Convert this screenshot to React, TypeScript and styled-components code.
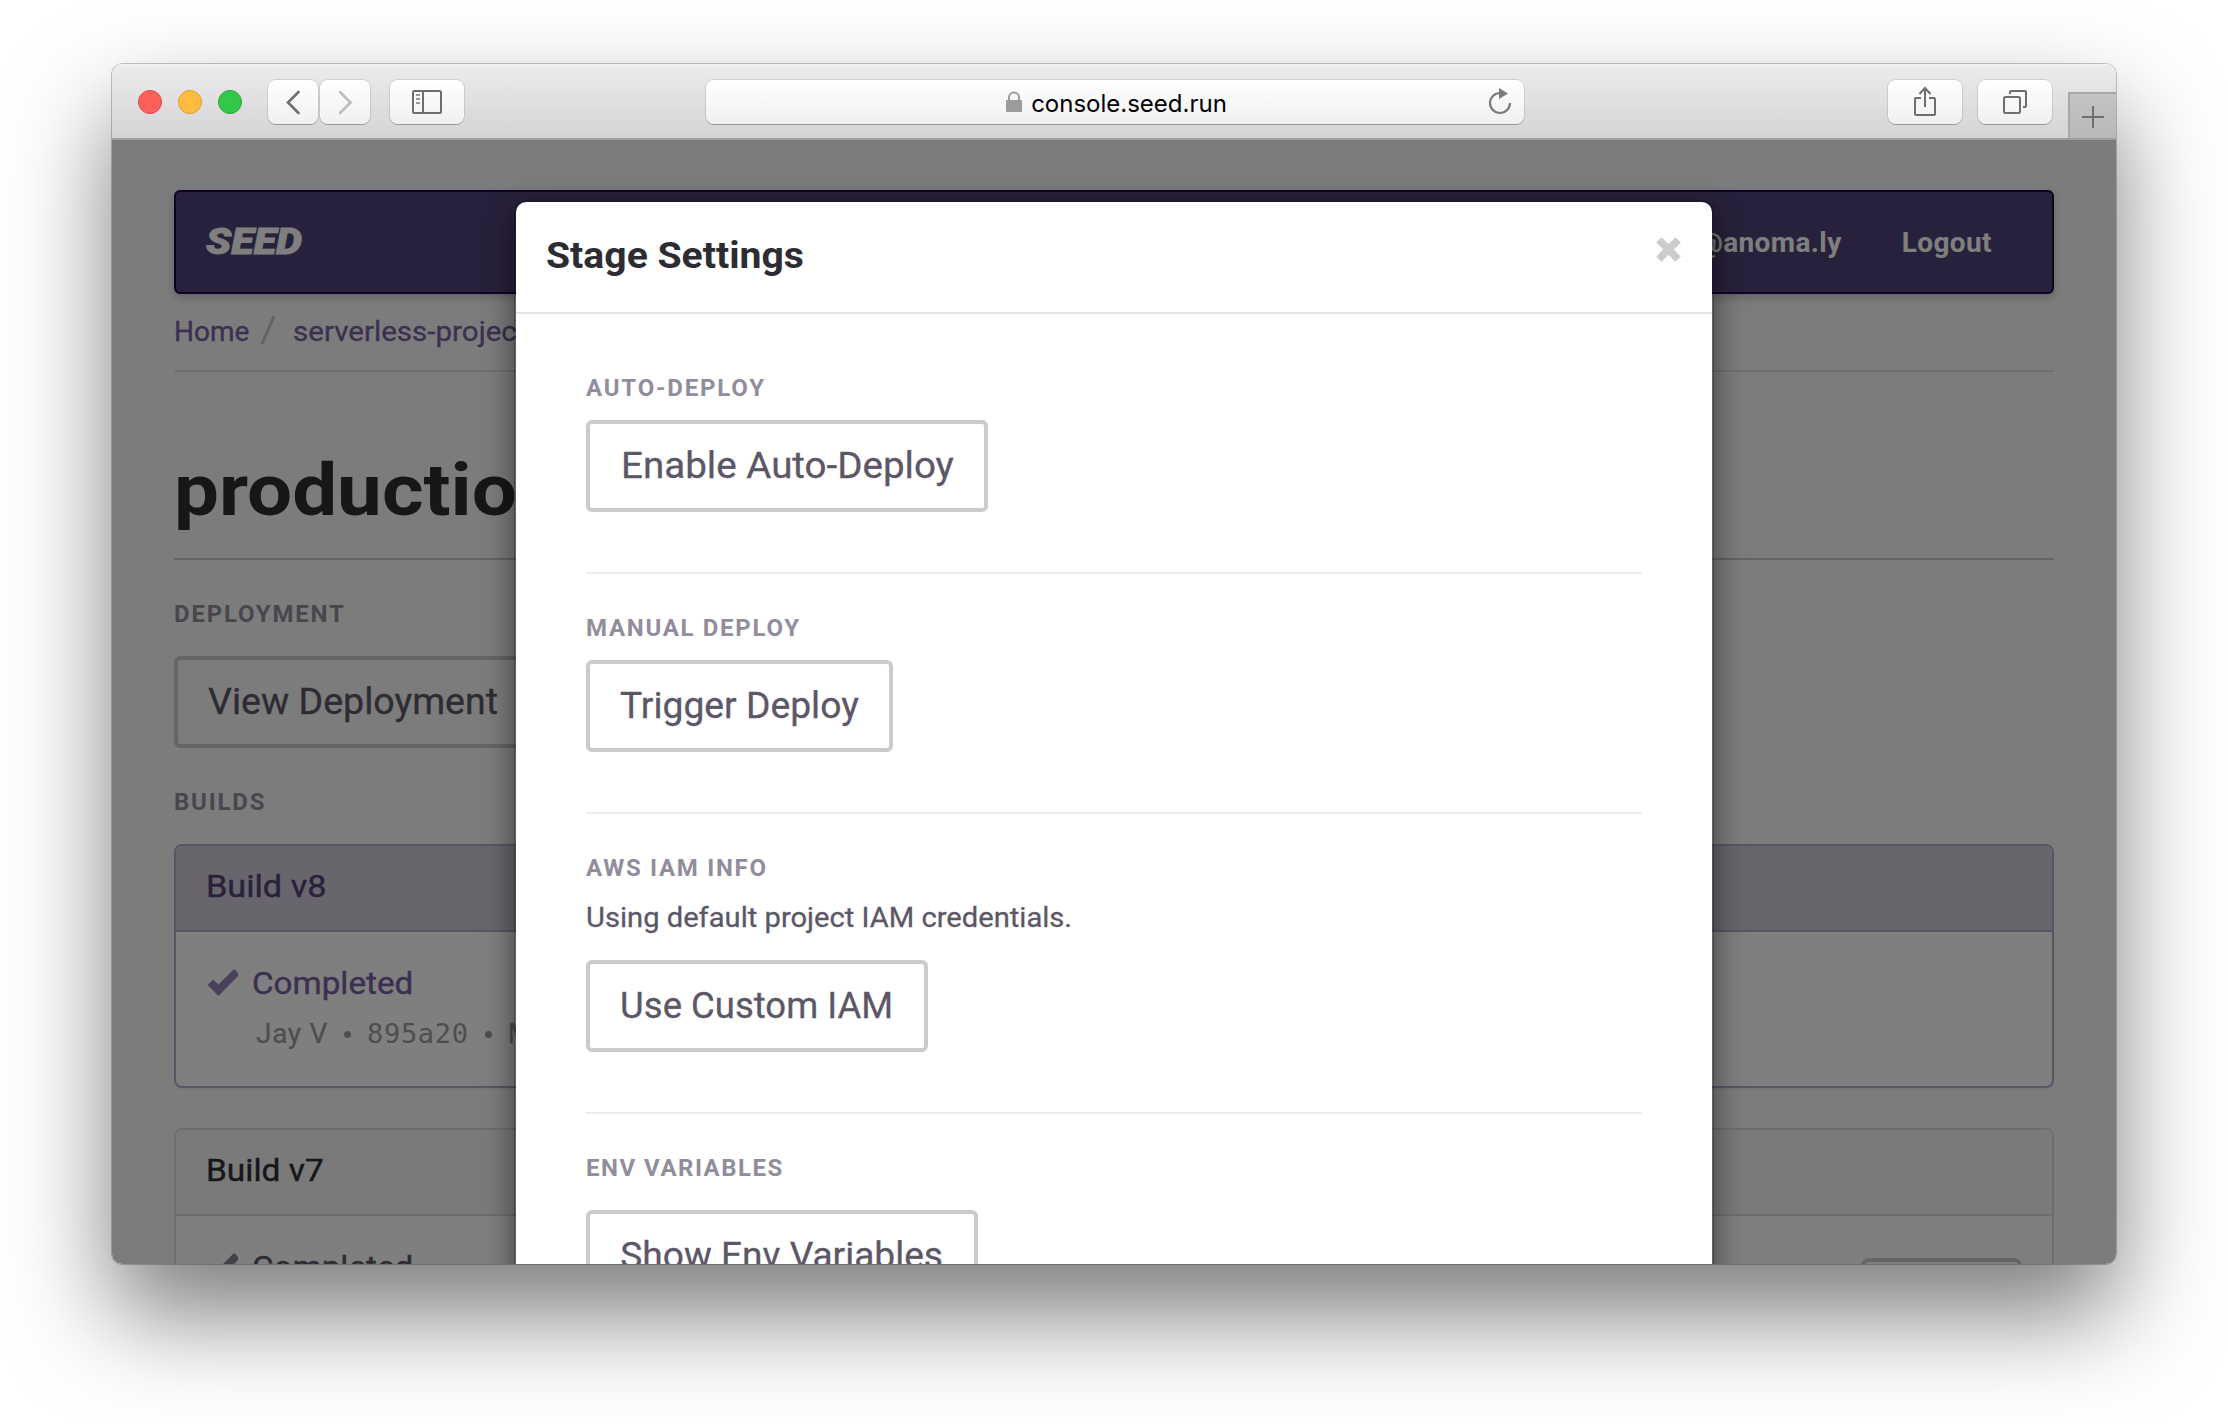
import React from "react";
import styled, { createGlobalStyle } from "styled-components";

const Global = createGlobalStyle`
  * { box-sizing: border-box; }
  body { margin: 0; background: #fff; font-family: Roboto, "Liberation Sans", sans-serif; overflow: hidden; }
`;

const Desktop = styled.div`
  width: 2228px;
  height: 1424px;
  padding: 64px 112px 0;
  overflow: hidden;
`;

const Window = styled.div`
  height: 1200px;
  display: flex;
  flex-direction: column;
  border-radius: 11px;
  box-shadow: 0 0 0 1px rgba(0, 0, 0, 0.22), 0 50px 100px rgba(0, 0, 0, 0.52);
`;

const Toolbar = styled.div`
  display: flex;
  align-items: flex-start;
  height: 76px;
  padding: 16px 0 0 26px;
  border-bottom: 2px solid #a09ca2;
  border-radius: 10px 10px 0 0;
  background: linear-gradient(#f6f5f7 0, #eceaed 3px, #d6d3d7 100%);
`;

const Lights = styled.div`
  display: flex;
  gap: 16px;
  padding: 10px 26px 0 0;
`;

const Light = styled.span<{ $fill: string; $edge: string }>`
  width: 24px;
  height: 24px;
  border-radius: 50%;
  background: ${(p) => p.$fill};
  border: 1px solid ${(p) => p.$edge};
`;

const ChromeButton = styled.div<{ $w: number; $ml?: number }>`
  display: flex;
  align-items: center;
  justify-content: center;
  width: ${(p) => p.$w}px;
  height: 44px;
  margin-left: ${(p) => p.$ml ?? 0}px;
  border-radius: 8px;
  background: linear-gradient(#fff, #f1f0f1);
  box-shadow: 0 0 0 1px rgba(0, 0, 0, 0.1), 0 1px 0 0 rgba(0, 0, 0, 0.22);
`;

const AddressBar = styled(ChromeButton)`
  justify-content: space-between;
  padding: 0 12px 0 38px;
`;

const Address = styled.div`
  display: flex;
  align-items: center;
  margin: 0 auto;
  gap: 8px;
  font: 400 24px/30px Inter, sans-serif;
  color: #000;
`;

const Url = styled.span`
  padding-top: 3px;
`;

const NewTab = styled.div`
  display: flex;
  align-items: center;
  justify-content: center;
  width: 48px;
  height: 46px;
  margin: 12px 0 0 16px;
  padding-top: 2px;
  border: 2px solid #a9a6aa;
  border-width: 2px 0 0 2px;
  background: linear-gradient(#c6c3c7, #bab7bb);
`;

const Viewport = styled.div`
  position: relative;
  flex: 1;
  overflow: hidden;
  border-radius: 0 0 10px 10px;
  background: #f9f9f9;
`;

const Page = styled.div`
  padding: 50px 62px 0;
`;

/* Widens a run of text horizontally from its left edge (or centre). */
const Wide = styled.span<{ $x: number; $center?: boolean }>`
  display: inline-block;
  white-space: nowrap;
  transform: scaleX(${(p) => p.$x});
  transform-origin: ${(p) => (p.$center ? "center" : "left")};
`;

const Navbar = styled.nav`
  display: flex;
  align-items: center;
  height: 104px;
  padding: 0 60px 0 30px;
  border: 2px solid #1f0050;
  border-radius: 6px;
  background: #504276;
  box-shadow: 0 4px 10px rgba(0, 0, 0, 0.2);
  color: #fff;
`;

const Brand = styled.span`
  margin-right: auto;
  font-size: 36px;
  font-weight: 900;
  font-style: italic;
  -webkit-text-stroke: 0.8px currentColor;
`;

const NavLink = styled.span`
  margin-left: 60px;
  font-size: 28px;
  font-weight: 700;
  letter-spacing: 0.4px;
`;

const Breadcrumb = styled.div`
  display: flex;
  height: 78px;
  padding-top: 18px;
  border-bottom: 2px solid #e0e0e0;
  font-size: 28px;
  line-height: 40px;
  -webkit-text-stroke: 0.3px currentColor;
  color: #76609e;
`;

const Slash = styled.svg`
  margin: 2px 17px 0 11px;
`;

const Title = styled.h1`
  margin: 0;
  height: 188px;
  padding: 79px 0 0 0;
  border-bottom: 2px solid #c6c6c6;
  font-size: 72px;
  font-weight: 700;
  line-height: 80px;
  color: #2e2c33;
`;

const Label = styled.div<{ $bottom?: number; $track?: number }>`
  padding-top: 37px;
  margin-bottom: ${(p) => p.$bottom ?? 15}px;
  font-size: 24px;
  font-weight: 700;
  line-height: 34px;
  letter-spacing: ${(p) => p.$track ?? 1.8}px;
  color: #928d9b;
`;

const ButtonBox = styled.button<{ $w: number }>`
  display: flex;
  align-items: center;
  justify-content: center;
  width: ${(p) => p.$w}px;
  height: 92px;
  padding: 0;
  border: 4px solid #cbcbcb;
  border-radius: 6px;
  background: transparent;
  font-family: inherit;
  font-size: 36px;
  -webkit-text-stroke: 0.3px currentColor;
  color: #5c5766;
`;

const Panel = styled.section<{ $active?: boolean }>`
  height: 244px;
  margin-bottom: 40px;
  overflow: hidden;
  border: 2px solid ${(p) => (p.$active ? "#b4aacc" : "#dddddd")};
  border-radius: 8px;
  background: #fff;
  box-shadow: 0 2px 2px rgba(0, 0, 0, 0.05);
`;

const PanelHead = styled.div<{ $active?: boolean }>`
  height: 86px;
  padding-left: 30px;
  border-bottom: 2px solid ${(p) => (p.$active ? "#b4aacc" : "#dddddd")};
  background: ${(p) => (p.$active ? "#d2cada" : "#f4f4f4")};
  font-size: 32px;
  line-height: 81px;
  -webkit-text-stroke: 0.4px currentColor;
  color: ${(p) => (p.$active ? "#504276" : "#2e2c33")};
`;

const PanelBody = styled.div`
  display: flex;
  padding: 31px 30px 0 31px;
`;

const Status = styled.div<{ $color: string }>`
  display: flex;
  font-size: 32px;
  line-height: 40px;
  -webkit-text-stroke: 0.4px currentColor;
  color: ${(p) => p.$color};
`;

const Check = styled.svg`
  margin: 6px 13px 0 0;
`;

const Meta = styled.div`
  display: flex;
  align-items: baseline;
  gap: 16px;
  margin-top: 11px;
  padding-left: 49px;
  font-size: 28px;
  line-height: 40px;
  letter-spacing: 0.7px;
  -webkit-text-stroke: 0.3px currentColor;
  color: #98a09b;
`;

const Dot = styled.i`
  width: 7px;
  height: 7px;
  border-radius: 50%;
  background: currentColor;
  align-self: center;
`;

const Hash = styled.span`
  font-family: "DejaVu Sans Mono", monospace;
  font-size: 27px;
  -webkit-text-stroke: 0;
`;

const PanelAction = styled.div`
  width: 161px;
  height: 68px;
  margin: 11px 0 0 auto;
  border: 4px solid #cbcbcb;
  border-radius: 8px;
`;

const Backdrop = styled.div`
  position: absolute;
  inset: 0;
  background: rgba(0, 0, 0, 0.5);
`;

const Modal = styled.div`
  width: 1200px;
  height: 1400px;
  margin: 60px auto 0;
  border: 2px solid rgba(0, 0, 0, 0.2);
  border-radius: 12px;
  background: #fff;
  background-clip: padding-box;
  box-shadow: 0 10px 30px rgba(0, 0, 0, 0.5);
`;

const ModalHead = styled.div`
  display: flex;
  align-items: flex-start;
  justify-content: space-between;
  height: 112px;
  padding: 29px 31px 0 30px;
  border-bottom: 2px solid #e5e5e5;
`;

const ModalTitle = styled.h4`
  margin: 0;
  font-size: 36px;
  font-weight: 700;
  line-height: 50px;
  color: #2e2c33;
`;

const Close = styled.svg`
  margin-top: 6px;
`;

const ModalBody = styled.div`
  padding: 20px 70px 0;
`;

const Group = styled.div`
  & + & {
    margin-top: 60px;
    border-top: 2px solid #ececec;
  }
`;

const Note = styled.p`
  margin: -2px 0 22px;
  font-size: 28px;
  line-height: 40px;
  -webkit-text-stroke: 0.3px currentColor;
  color: #5c5766;
`;

const Button = ({ w, x, children }: { w: number; x: number; children: React.ReactNode }) => (
  <ButtonBox $w={w}>
    <Wide $x={x} $center>{children}</Wide>
  </ButtonBox>
);

const CheckIcon = ({ color }: { color: string }) => (
  <Check width="32" height="28" viewBox="0 0 32 28">
    <path d="M0.5 16 L6 10.5 L11.5 15.5 L26.5 0.5 L28 0.5 L31 4 V7 L11.5 27 Z" fill={color} />
  </Check>
);

const icon = { fill: "none", stroke: "#6e6e6e", strokeWidth: 2 };

export default function App() {
  return (
    <Desktop>
      <Global />
      <Window>
        <Toolbar>
          <Lights>
            <Light $fill="#fc605b" $edge="#e0443e" />
            <Light $fill="#fdbc40" $edge="#dfa023" />
            <Light $fill="#34c84a" $edge="#1dad2b" />
          </Lights>
          <ChromeButton $w={50}>
            <svg width="50" height="44">
              <path d="M30.5 12 L20 22.5 L30.5 33" fill="none" stroke="#6e6e6e" strokeWidth="2.6" strokeLinecap="round" />
            </svg>
          </ChromeButton>
          <ChromeButton $w={50} $ml={2}>
            <svg width="50" height="44">
              <path d="M20 12 L30.5 22.5 L20 33" fill="none" stroke="#bdbdbd" strokeWidth="2.6" strokeLinecap="round" />
            </svg>
          </ChromeButton>
          <ChromeButton $w={74} $ml={20}>
            <svg width="74" height="44" {...icon}>
              <rect x="23" y="11" width="28" height="22" rx="1.5" />
              <path d="M33 11V33" />
              <path d="M26 15H30M26 19H30M26 23H30" stroke="#999" />
            </svg>
          </ChromeButton>
          <AddressBar $w={818} $ml={242}>
            <Address>
              <svg width="18" height="22" viewBox="0 0 18 22">
                <path d="M4 10V6.5a5 5 0 0 1 10 0V10" fill="none" stroke="#9b9b9b" strokeWidth="2" />
                <rect x="1" y="9" width="16" height="12" rx="1" fill="#9b9b9b" />
              </svg>
              <Url>console.seed.run</Url>
            </Address>
            <svg width="24" height="28" viewBox="0 0 24 28">
              <path d="M12 5A10 10 0 1 0 22 15" fill="none" stroke="#7b7b7b" strokeWidth="2.2" />
              <path d="M11 0 L20 5.5 L11 11Z" fill="#7b7b7b" />
            </svg>
          </AddressBar>
          <ChromeButton $w={74} $ml={364}>
            <svg width="74" height="44" {...icon}>
              <path d="M33 18H28a1 1 0 0 0-1 1V34a1 1 0 0 0 1 1H46a1 1 0 0 0 1-1V19a1 1 0 0 0-1-1H41" />
              <path d="M37 27V8M31.5 14L37 8L42.5 14" />
            </svg>
          </ChromeButton>
          <ChromeButton $w={74} $ml={16}>
            <svg width="74" height="44" {...icon}>
              <rect x="26" y="17" width="16" height="16" rx="1.5" />
              <path d="M32 14V12a1 1 0 0 1 1-1H47a1 1 0 0 1 1 1V26a1 1 0 0 1-1 1H45" />
            </svg>
          </ChromeButton>
          <NewTab>
            <svg width="22" height="22" {...icon}>
              <path d="M11 0V22M0 11H22" />
            </svg>
          </NewTab>
        </Toolbar>
        <Viewport>
          <Page>
            <Navbar>
              <Brand>
                <Wide $x={1.15}>SEED</Wide>
              </Brand>
              <NavLink>jay@anoma.ly</NavLink>
              <NavLink>Logout</NavLink>
            </Navbar>
            <Breadcrumb>
              <span>Home</span>
              <Slash width="16" height="32" viewBox="0 0 16 32">
                <path d="M2 30 L14 2" stroke="#c4c4c4" strokeWidth="3" />
              </Slash>
              <Wide $x={1.055}>serverless-project</Wide>
            </Breadcrumb>
            <Title>
              <Wide $x={1.11}>production</Wide>
            </Title>
            <Label $bottom={25}>DEPLOYMENT</Label>
            <Button w={358} x={1.043}>View Deployment</Button>
            <Label $bottom={25}>BUILDS</Label>
            <Panel $active>
              <PanelHead $active>
                <Wide $x={1.07}>Build v8</Wide>
              </PanelHead>
              <PanelBody>
                <div>
                  <Status $color="#76609e">
                    <CheckIcon color="#9585b4" />
                    <Wide $x={1.038}>Completed</Wide>
                  </Status>
                  <Meta>
                    <span>Jay V</span>
                    <Dot />
                    <Hash>895a20</Hash>
                    <Dot />
                    <span>Mar 1</span>
                  </Meta>
                </div>
              </PanelBody>
            </Panel>
            <Panel>
              <PanelHead>
                <Wide $x={1.045}>Build v7</Wide>
              </PanelHead>
              <PanelBody>
                <Status $color="#5c5766">
                  <CheckIcon color="#86838c" />
                  <Wide $x={1.038}>Completed</Wide>
                </Status>
                <PanelAction />
              </PanelBody>
            </Panel>
          </Page>
          <Backdrop>
            <Modal>
              <ModalHead>
                <ModalTitle>
                  <Wide $x={1.087}>Stage Settings</Wide>
                </ModalTitle>
                <Close width="25" height="25" viewBox="0 0 25 25">
                  <path d="M5.5 5.5L19.5 19.5M19.5 5.5L5.5 19.5" stroke="#cccccc" strokeWidth="7.5" strokeLinecap="square" />
                </Close>
              </ModalHead>
              <ModalBody>
                <Group>
                  <Label>AUTO-DEPLOY</Label>
                  <Button w={402} x={1.07}>Enable Auto-Deploy</Button>
                </Group>
                <Group>
                  <Label $track={1.7}>MANUAL DEPLOY</Label>
                  <Button w={307} x={1.035}>Trigger Deploy</Button>
                </Group>
                <Group>
                  <Label $track={1.7}>AWS IAM INFO</Label>
                  <Note>
                    <Wide $x={1.041}>Using default project IAM credentials.</Wide>
                  </Note>
                  <Button w={342} x={1.014}>Use Custom IAM</Button>
                </Group>
                <Group>
                  <Label $bottom={25} $track={1.5}>ENV VARIABLES</Label>
                  <Button w={392} x={1.03}>Show Env Variables</Button>
                </Group>
              </ModalBody>
            </Modal>
          </Backdrop>
        </Viewport>
      </Window>
    </Desktop>
  );
}
